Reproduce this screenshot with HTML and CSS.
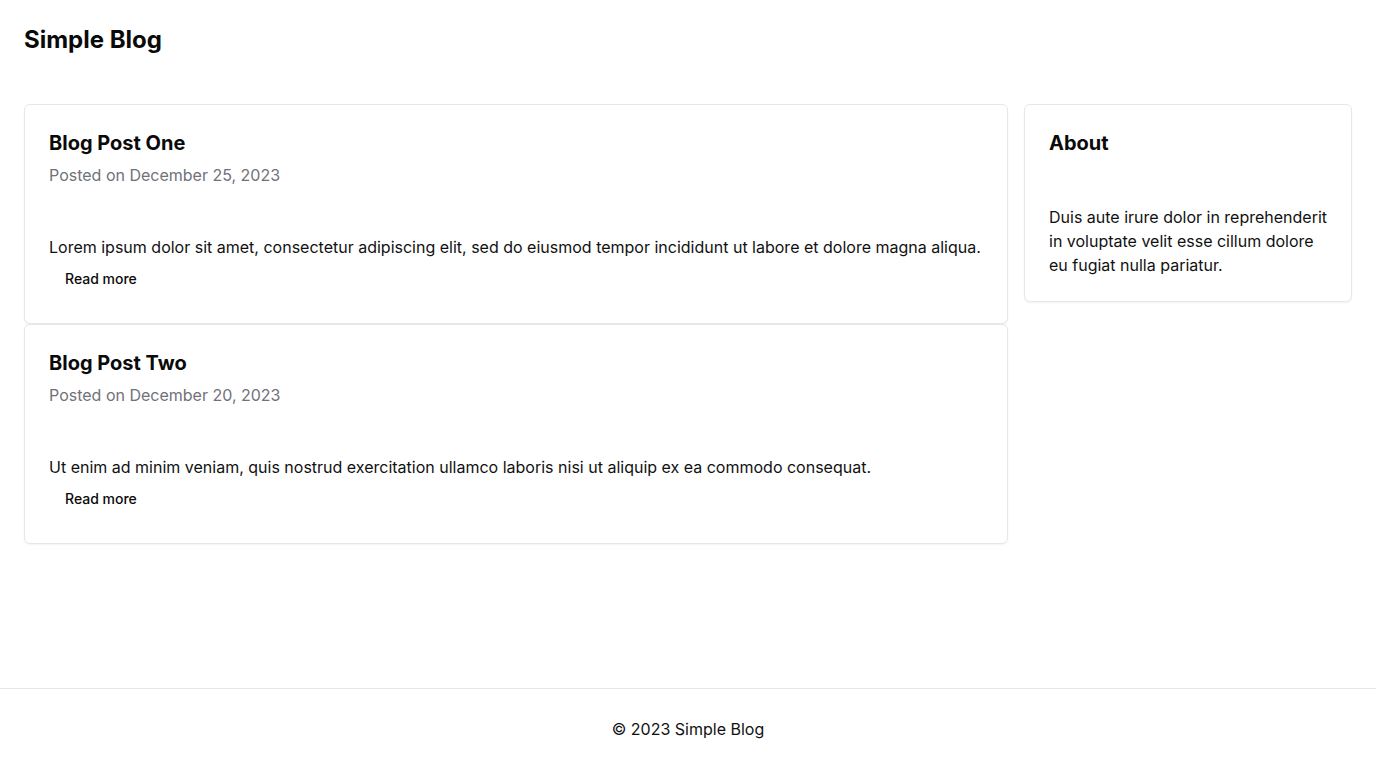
FILE: index.html
```html
<!DOCTYPE html>
<html lang="en">
<head>
<meta charset="utf-8">
<title>Simple Blog</title>
<link rel="stylesheet" href="styles.css">
</head>
<body>
<div class="page">
  <header class="site-header">
    <h1 class="site-title">Simple Blog</h1>
  </header>
  <main class="main">
    <div class="layout">
      <div class="posts">
        <article class="card">
          <div class="card-header">
            <h2 class="card-title">Blog Post One</h2>
            <p class="card-desc">Posted on December 25, 2023</p>
          </div>
          <div class="card-content">
            <p class="card-text">Lorem ipsum dolor sit amet, consectetur adipiscing elit, sed do eiusmod tempor incididunt ut labore et dolore magna aliqua.</p>
            <button class="btn-ghost">Read more</button>
          </div>
        </article>
        <article class="card">
          <div class="card-header">
            <h2 class="card-title">Blog Post Two</h2>
            <p class="card-desc">Posted on December 20, 2023</p>
          </div>
          <div class="card-content">
            <p class="card-text">Ut enim ad minim veniam, quis nostrud exercitation ullamco laboris nisi ut aliquip ex ea commodo consequat.</p>
            <button class="btn-ghost">Read more</button>
          </div>
        </article>
      </div>
      <aside class="sidebar">
        <div class="card">
          <div class="card-header">
            <h2 class="card-title">About</h2>
          </div>
          <div class="card-content side-content">
            <p class="card-text">Duis aute irure dolor in reprehenderit in voluptate velit esse cillum dolore eu fugiat nulla pariatur.</p>
          </div>
        </div>
      </aside>
    </div>
  </main>
  <footer class="site-footer">
    <p>© 2023 Simple Blog</p>
  </footer>
</div>
</body>
</html>
```

FILE: styles.css
```css
* { box-sizing: border-box; }
html, body { margin: 0; padding: 0; }
body {
  font-family: Inter, "Noto Sans", sans-serif;
  color: #0a0a0a;
  background: #ffffff;
  font-size: 16px;
  line-height: 24px;
}
p, h1, h2 { margin: 0; }
.page {
  min-height: 100vh;
  display: flex;
  flex-direction: column;
}
.site-header {
  padding: 24px;
}
.site-title {
  font-size: 24px;
  line-height: 32px;
  font-weight: 700;
}
.main {
  flex: 1;
  padding: 24px;
}
.layout {
  display: grid;
  grid-template-columns: 3fr 1fr;
  gap: 16px;
  align-items: start;
}
.posts {
  display: flex;
  flex-direction: column;
}
.card {
  border: 1px solid #e5e7eb;
  border-radius: 6px;
  background: #fff;
  box-shadow: 0 1px 2px rgba(0,0,0,0.05);
}
.card-header {
  padding: 24px;
  display: flex;
  flex-direction: column;
  gap: 6px;
}
.card-title {
  font-size: 20px;
  line-height: 28px;
  font-weight: 700;
}
.card-desc {
  color: #71717a;
  font-size: 16px;
  line-height: 24px;
}
.card-content {
  padding: 24px;
}
.side-content {
  padding-right: 20px;
}
.card-text {
  font-size: 16px;
  line-height: 24px;
  color: #111111;
}
.btn-ghost {
  display: flex;
  align-items: center;
  height: 40px;
  padding: 0 16px 2px;
  border: 0;
  background: transparent;
  font-family: inherit;
  font-size: 14px;
  font-weight: 500;
  color: #0a0a0a;
  border-radius: 6px;
  cursor: pointer;
}
.site-footer {
  border-top: 1px solid #e5e7eb;
  padding: 28px 24px 27px;
  text-align: center;
  font-size: 16px;
  line-height: 24px;
  color: #111111;
}
```
